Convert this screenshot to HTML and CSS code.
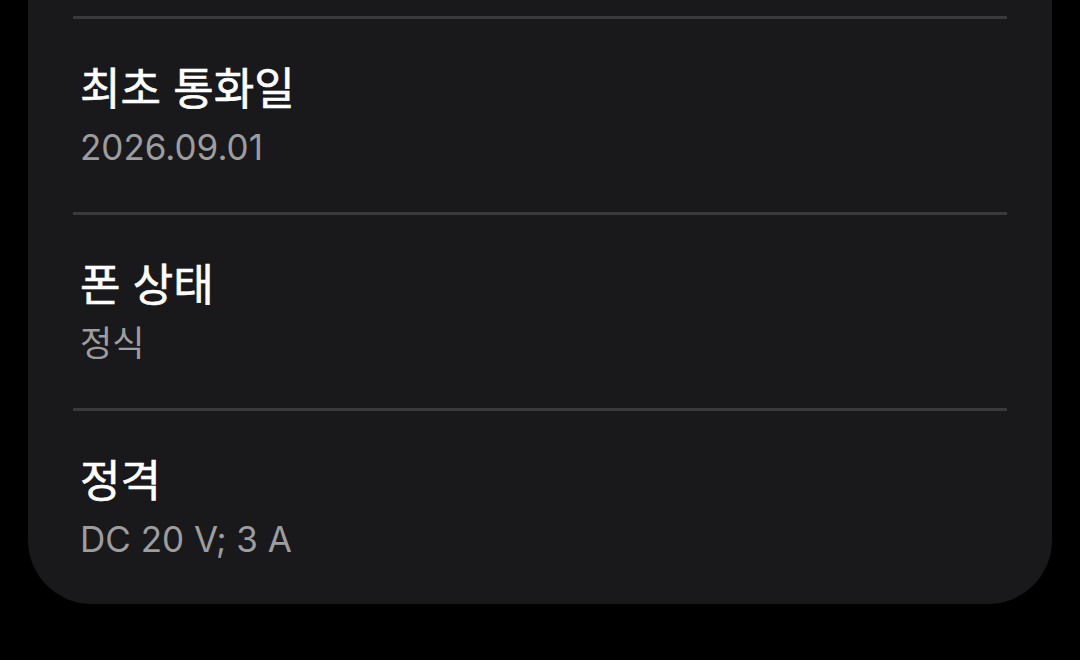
FILE: index.html
```html
<!DOCTYPE html>
<html lang="ko">
<head>
<meta charset="utf-8">
<link rel="stylesheet" href="styles.css">
</head>
<body>
<div class="card">
  <div class="row">
    <div class="divider"></div>
    <div class="item">
      <div class="title">최초 통화일</div>
      <div class="value">2026.09.01</div>
    </div>
  </div>
  <div class="row">
    <div class="divider"></div>
    <div class="item">
      <div class="title">폰 상태</div>
      <div class="value">정식</div>
    </div>
  </div>
  <div class="row">
    <div class="divider"></div>
    <div class="item">
      <div class="title">정격</div>
      <div class="value">DC 20 V; 3 A</div>
    </div>
  </div>
</div>
</body>
</html>
```
FILE: styles.css
```css
html, body {
  margin: 0;
  padding: 0;
  background: #000;
  height: 660px;
  overflow: hidden;
}
.card {
  margin: 0 28px;
  padding-top: 16px;
  background: #19191b;
  border-radius: 0 0 64px 64px;
}
.divider {
  height: 3px;
  margin: 0 45px;
  background: #3a3a3c;
}
.item {
  padding: 42px 52px 37px;
  display: flex;
  flex-direction: column;
}
.title {
  font-family: "Noto Sans CJK KR", "Noto Sans", sans-serif;
  font-weight: 400;
  font-size: 44px;
  line-height: 50px;
  color: #ffffff;
  -webkit-text-stroke: 0.6px #ffffff;
}
.value {
  font-family: Inter, "Noto Sans CJK KR", sans-serif;
  font-size: 35px;
  line-height: 56px;
  color: #9d9d9f;
  margin-top: 8px;
}
```
